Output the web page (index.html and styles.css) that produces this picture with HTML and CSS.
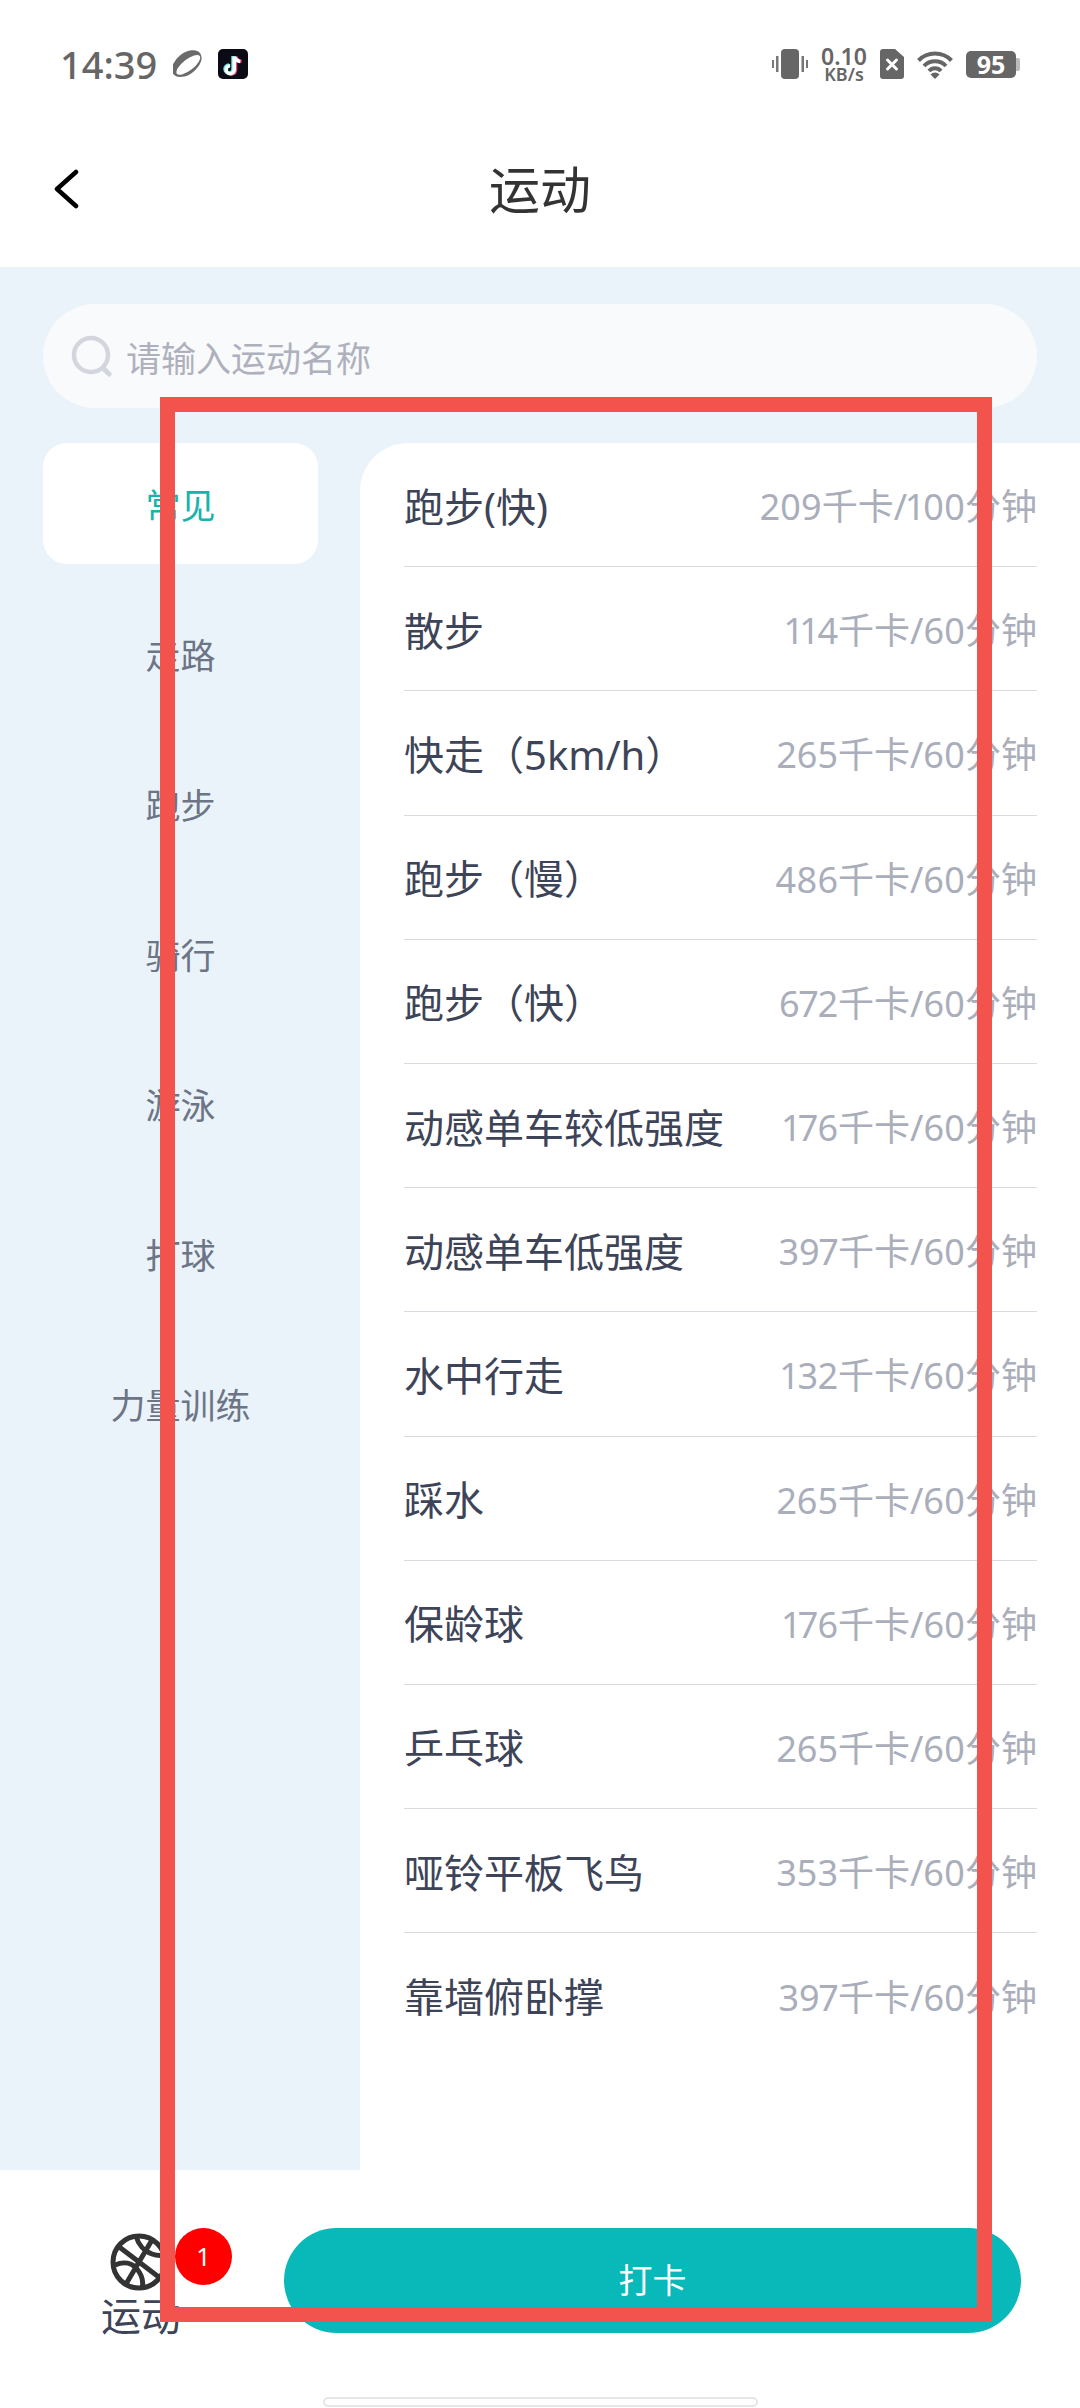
FILE: index.html
```html
<!DOCTYPE html>
<html lang="zh-CN">
<head>
   <meta charset="UTF-8">
   <meta name="viewport" content="width=device-width, initial-scale=1.0">
   <title>运动</title>
   <link rel="stylesheet" href="styles.css">
</head>
<body>
    <div class="page">
        <!-- Status bar -->
        <div class="status-bar">
            <div class="status-left">
                <span class="status-time">14:39</span>
                <svg class="icon-planet" width="30" height="28" viewBox="0 0 30 28">
                    <g transform="rotate(-38 14 14)">
                        <ellipse cx="14" cy="13.500" rx="17" ry="10.500" fill="#6a6a6a"/>
                        <ellipse cx="14.500" cy="15.500" rx="14.500" ry="5.500" fill="#fff"/>
                    </g>
                </svg>
                <svg class="icon-tiktok" width="30" height="30" viewBox="0 0 30 30">
                    <rect width="30" height="30" rx="5" fill="#0b0b16"/>
                    <path fill="none" stroke="#5fe6e6" stroke-width="3.500" d="M15 7v13a4 4 0 1 1-4-4"/>
                    <path fill="none" stroke="#f04a78" stroke-width="3.500" d="M17.500 8.500v13a4 4 0 0 1-6.500 2.500M18 8c.6 2.500 2.500 4.300 5.500 4.600"/>
                    <path fill="none" stroke="#fff" stroke-width="3.500" d="M16.200 7.500v13.200a4 4 0 1 1-4-4M16.500 7.500c.6 2.700 2.600 4.500 5.700 4.900"/>
                </svg>
            </div>
            <div class="status-right">
                <svg width="36" height="30" viewBox="0 0 36 30">
                    <rect x="9" y="0" width="18" height="30" rx="4" fill="#666"/>
                    <rect x="0" y="11" width="2" height="8" fill="#777"/>
                    <rect x="4" y="7" width="2.500" height="16" fill="#777"/>
                    <rect x="29.500" y="7" width="2.500" height="16" fill="#777"/>
                    <rect x="34" y="11" width="2" height="8" fill="#777"/>
                </svg>
                <div class="net-speed">
                    <span class="net-value">0.10</span>
                    <span class="net-unit">KB/s</span>
                </div>
                <svg width="24" height="30" viewBox="0 0 24 30">
                    <path fill="#666" d="M3 0h12l9 8v19a3 3 0 0 1-3 3H3a3 3 0 0 1-3-3V3a3 3 0 0 1 3-3z"/>
                    <path stroke="#fff" stroke-width="3" stroke-linecap="round" d="M7.500 11l9 9M16.500 11l-9 9"/>
                </svg>
                <svg width="36" height="29" viewBox="0 0 36 29">
                    <path fill="none" stroke="#666" stroke-width="4" d="M1.500 10.500a23 23 0 0 1 33 0M7 16a15 15 0 0 1 22 0"/>
                    <path fill="none" stroke="#666" stroke-width="4" d="M12 21a8 8 0 0 1 12 0"/>
                    <path fill="#666" d="M13.500 24.500a6 6 0 0 1 9 0L18 29z"/>
                </svg>
                <div class="battery">
                    <div class="battery-body">95</div>
                    <div class="battery-nub"></div>
                </div>
            </div>
        </div>

        <!-- Title bar -->
        <div class="title-bar">
            <svg class="icon-back" width="26" height="40" viewBox="0 0 26 40">
                <path fill="none" stroke="#000" stroke-width="4.500" stroke-linecap="round" stroke-linejoin="round" d="M23 3L4 20l19 17"/>
            </svg>
            <h1 class="title">运动</h1>
        </div>

        <div class="content">
            <div class="search">
                <svg width="42" height="42" viewBox="0 0 42 42">
                    <circle cx="20" cy="20" r="17" fill="none" stroke="#d3d6de" stroke-width="4.500"/>
                    <path stroke="#d3d6de" stroke-width="5" stroke-linecap="round" d="M32 33l6 6"/>
                </svg>
                <span class="search-text">请输入运动名称</span>
            </div>

            <div class="panels">
                <div class="side-menu">
                    <div class="side-item active">常见</div>
                    <div class="side-item">走路</div>
                    <div class="side-item">跑步</div>
                    <div class="side-item">骑行</div>
                    <div class="side-item">游泳</div>
                    <div class="side-item">打球</div>
                    <div class="side-item">力量训练</div>
                </div>
                <div class="sport-list">
                    <div class="sport-row"><span class="sport-name">跑步(快)</span><span class="sport-kcal">209千卡/100分钟</span></div>
                    <div class="sport-row"><span class="sport-name">散步</span><span class="sport-kcal">114千卡/60分钟</span></div>
                    <div class="sport-row"><span class="sport-name">快走（5km/h）</span><span class="sport-kcal">265千卡/60分钟</span></div>
                    <div class="sport-row"><span class="sport-name">跑步（慢）</span><span class="sport-kcal">486千卡/60分钟</span></div>
                    <div class="sport-row"><span class="sport-name">跑步（快）</span><span class="sport-kcal">672千卡/60分钟</span></div>
                    <div class="sport-row"><span class="sport-name">动感单车较低强度</span><span class="sport-kcal">176千卡/60分钟</span></div>
                    <div class="sport-row"><span class="sport-name">动感单车低强度</span><span class="sport-kcal">397千卡/60分钟</span></div>
                    <div class="sport-row"><span class="sport-name">水中行走</span><span class="sport-kcal">132千卡/60分钟</span></div>
                    <div class="sport-row"><span class="sport-name">踩水</span><span class="sport-kcal">265千卡/60分钟</span></div>
                    <div class="sport-row"><span class="sport-name">保龄球</span><span class="sport-kcal">176千卡/60分钟</span></div>
                    <div class="sport-row"><span class="sport-name">乒乓球</span><span class="sport-kcal">265千卡/60分钟</span></div>
                    <div class="sport-row"><span class="sport-name">哑铃平板飞鸟</span><span class="sport-kcal">353千卡/60分钟</span></div>
                    <div class="sport-row"><span class="sport-name">靠墙俯卧撑</span><span class="sport-kcal">397千卡/60分钟</span></div>
                </div>
            </div>
        </div>

        <!-- Bottom bar -->
        <div class="footer">
            <div class="footer-tab">
                <svg width="58" height="58" viewBox="0 0 58 58">
                    <g fill="none" stroke="#333" stroke-width="5">
                        <circle cx="29" cy="29" r="26"/>
                        <path d="M42 7L16 51M8 13l42 32M5 32c9-4 17-2 22 4s7 12 5 20M26 3c2 8 8 15 16 18 5 2 9 2 13 1"/>
                    </g>
                </svg>
                <span class="footer-label">运动</span>
                <span class="badge">1</span>
            </div>
            <div class="punch-button">打卡</div>
        </div>
        <div class="home-bar"></div>

        <!-- Red marker frame over the screenshot -->
        <div class="marker"></div>
    </div>
</body>
</html>
```

FILE: styles.css
```css
* {
    box-sizing: border-box;
}

body {
    margin: 0;
    background: #fff;
    font-family: "Noto Sans", "Noto Sans CJK SC", sans-serif;
}

.page {
    position: relative;
    width: 1080px;
    height: 2408px;
    overflow: hidden;
    display: flex;
    flex-direction: column;
}

/* Status bar */
.status-bar {
    height: 81px;
    padding: 47px 60px 0 60px;
    display: flex;
    justify-content: space-between;
    align-items: center;
}

.status-left {
    display: flex;
    align-items: center;
}

.status-time {
    font-size: 38px;
    font-weight: 500;
    color: #666;
    line-height: 34px;
    width: 113px;
}

.icon-tiktok {
    margin-left: 15px;
}

.status-right {
    display: flex;
    align-items: center;
    gap: 13px;
}

.net-speed {
    width: 46px;
    display: flex;
    flex-direction: column;
    align-items: center;
    color: #666;
    font-weight: 600;
}

.net-value {
    font-size: 23px;
    line-height: 20px;
}

.net-unit {
    font-size: 18px;
    line-height: 16px;
}

.battery {
    display: flex;
    align-items: center;
}

.battery-body {
    width: 50px;
    height: 27px;
    border-radius: 5px;
    background: #666;
    color: #fff;
    font-size: 25px;
    font-weight: 700;
    line-height: 27px;
    text-align: center;
}

.battery-nub {
    width: 4px;
    height: 13px;
    background: #bbb;
    border-radius: 0 2px 2px 0;
}

/* Title bar */
.title-bar {
    position: relative;
    height: 186px;
    padding-bottom: 42px;
    display: flex;
    align-items: flex-end;
    justify-content: center;
}

.title {
    margin: 0;
    font-size: 51px;
    font-weight: 400;
    color: #333;
    line-height: 72px;
    height: 72px;
}

.icon-back {
    position: absolute;
    left: 53px;
    bottom: 58px;
}

/* Main area */
.content {
    height: 1903px;
    background: #eaf3f9;
    display: flex;
    flex-direction: column;
    padding-top: 37px;
}

.search {
    height: 104px;
    margin: 0 43px;
    padding-left: 28px;
    border-radius: 52px;
    background: #f9fafb;
    display: flex;
    align-items: center;
    gap: 13px;
}

.search-text {
    font-size: 35px;
    color: #aeb1bd;
}

.panels {
    flex: 1;
    margin-top: 35px;
    display: flex;
}

.side-menu {
    width: 360px;
    padding-left: 43px;
    padding-right: 42px;
    display: flex;
    flex-direction: column;
    gap: 29px;
}

.side-item {
    height: 121px;
    border-radius: 24px;
    display: flex;
    align-items: center;
    justify-content: center;
    font-size: 35px;
    color: #6c7485;
}

.side-item.active {
    background: #fff;
    color: #17b3ad;
}

.sport-list {
    flex: 1;
    background: #fff;
    border-top-left-radius: 48px;
    padding: 0 43px 0 44px;
}

.sport-row {
    height: 124.2px;
    border-bottom: 1px solid #d9dbe0;
    display: flex;
    align-items: center;
    justify-content: space-between;
}

.sport-row:last-child {
    border-bottom: none;
}

.sport-name {
    font-size: 40px;
    color: #3d4457;
}

.sport-kcal {
    font-size: 36px;
    color: #a9aeba;
    font-variant-numeric: proportional-nums;
}

/* Bottom bar */
.footer {
    height: 167px;
    padding: 58px 59px 0 101px;
    display: flex;
    align-items: flex-start;
}

.footer-tab {
    position: relative;
    width: 183px;
    display: flex;
    flex-direction: column;
    align-items: flex-start;
    padding-top: 5px;
}

.footer-tab svg {
    margin-left: 9px;
}

.footer-label {
    font-size: 40px;
    line-height: 50px;
    color: #3d4457;
}

.badge {
    position: absolute;
    left: 74px;
    top: 0;
    width: 57px;
    height: 57px;
    border-radius: 50%;
    background: #f00;
    color: #fff;
    font-size: 25px;
    line-height: 57px;
    text-align: center;
}

.punch-button {
    flex: 1;
    height: 105px;
    border-radius: 53px;
    background: #09b8b8;
    color: #fff;
    font-size: 34px;
    line-height: 105px;
    text-align: center;
}

.home-bar {
    position: absolute;
    left: 323px;
    top: 2397px;
    width: 435px;
    height: 10px;
    border: 2px solid #e6e6e8;
    border-radius: 5px;
    background: #fff;
}

.marker {
    position: absolute;
    left: 160px;
    top: 397px;
    width: 832px;
    height: 1925px;
    border: 15px solid #f2534d;
}
```
